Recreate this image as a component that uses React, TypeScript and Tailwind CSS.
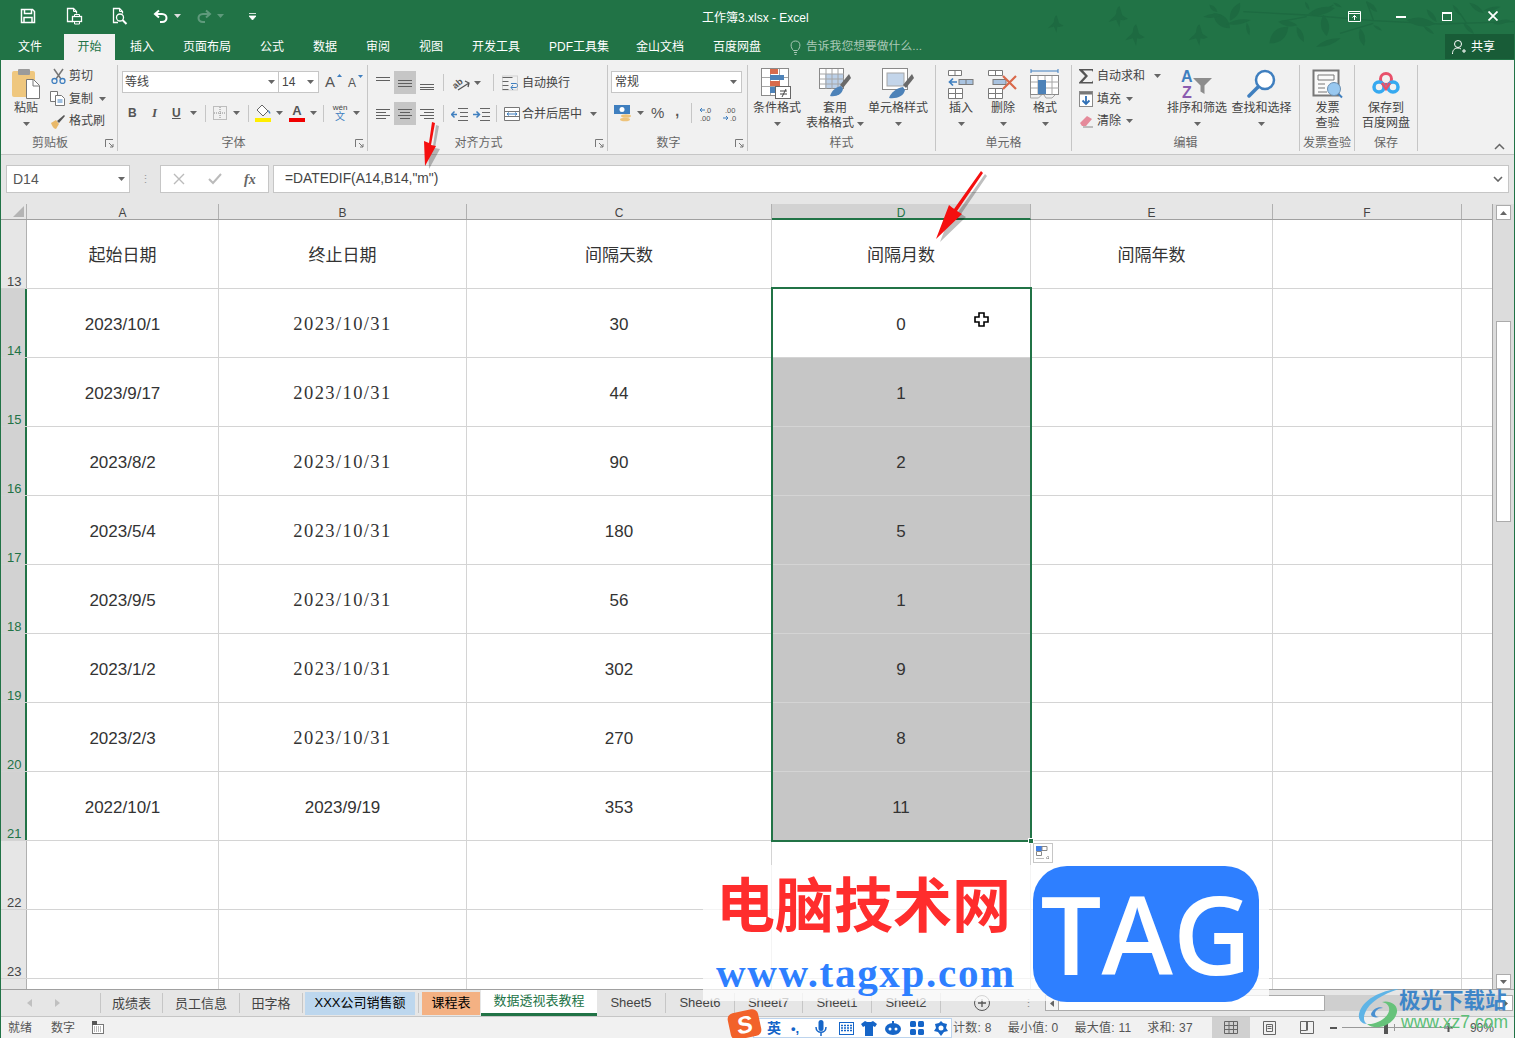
import React from "react";

const Caret = ({ c = "#666", className = "" }: { c?: string; className?: string }) => (
  <svg width="7" height="4" viewBox="0 0 7 4" className={className}><path d="M0 0h7L3.5 4z" fill={c} /></svg>
);

const Sep = ({ h = 22, ml = 0, mr = 0 }: { h?: number; ml?: number; mr?: number }) => (
  <div className="w-px bg-[#c6c6c6] shrink-0" style={{ height: h, marginLeft: ml, marginRight: mr }} />
);

const Lines = ({ y, w }: { y: number[]; w: [number, number][] }) => (
  <svg width="16" height="16" viewBox="0 0 16 16">
    {y.map((v, i) => (
      <rect key={i} x={w[i][0]} y={v} width={w[i][1]} height="1" fill="#606060" />
    ))}
  </svg>
);

const AlignBtn = ({ y, w, on }: { y: number[]; w: [number, number][]; on?: boolean }) => (
  <div className={`w-[22px] h-[23px] flex items-center justify-center ${on ? "bg-[#c6c6c6]" : ""}`}>
    <Lines y={y} w={w} />
  </div>
);

const full: [number, number][] = [[1, 14], [1, 14], [1, 14]];

const SheetGrid = ({ children }: { children?: React.ReactNode }) => (
  <g>
    <rect x=".5" y=".5" width="27" height="27" fill="#fff" stroke="#8a8a8a" />
    <path d="M1 9.5h26M1 18.5h26M9.5 1v26M18.5 1v26" stroke="#a6a6a6" />
    {children}
  </g>
);

const IconCond = () => (
  <svg width="32" height="32" viewBox="0 0 32 32">
    <SheetGrid>
      <rect x="9" y="1" width="8" height="5" fill="#d86b4c" />
      <rect x="9" y="7" width="14" height="5" fill="#4d82b8" />
      <rect x="9" y="13" width="10" height="5" fill="#d86b4c" />
      <rect x="9" y="19" width="7" height="6" fill="#4d82b8" />
    </SheetGrid>
    <rect x="14.5" y="18.5" width="15" height="12" fill="#fff" stroke="#666" />
    <path d="M19 23h7M19 26h7M25 21l-4 8" stroke="#444" fill="none" />
  </svg>
);
const IconTable = () => (
  <svg width="32" height="32" viewBox="0 0 32 32">
    <rect x=".5" y=".5" width="24" height="20" fill="#fff" stroke="#8a8a8a" />
    <rect x="6" y="6" width="18" height="14" fill="#bcd0e8" />
    <path d="M1 6h24M1 11h24M1 16h24M7 1v20M13 1v20M19 1v20" stroke="#a6a6a6" />
    <path d="M30 6l-9 11 3 3 8-10z" fill="#6a6a6a" />
    <path d="M11 28c2-6 6-9 11-10l2 3c-1 5-6 8-13 7z" fill="#4d82b8" />
  </svg>
);
const IconStyle = () => (
  <svg width="32" height="32" viewBox="0 0 32 32">
    <rect x=".5" y=".5" width="25" height="21" fill="#fff" stroke="#8a8a8a" />
    <rect x="5" y="5" width="17" height="13" fill="#c3d5ea" stroke="#a6a6a6" />
    <path d="M30 6l-9 11 3 3 8-10z" fill="#6a6a6a" />
    <path d="M7 30c2-6 8-10 14-11l2 3c-1 6-8 9-16 8z" fill="#4d82b8" />
  </svg>
);
const IconInsert = () => (
  <svg width="28" height="30" viewBox="0 0 28 30">
    <path d="M1.500 1.500h13v5h-13zM8 1.500v5M1.500 19.500h14v10h-14zM8.500 19.500v10M1.500 24.500h14" fill="#fff" stroke="#7a7a7a" />
    <rect x="12" y="10.500" width="14" height="5" fill="#a9c3e0" stroke="#7a7a7a" />
    <path d="M19 10.500v5" stroke="#7a7a7a" />
    <path d="M10 13H3M6 9.500L2.500 13 6 16.500" stroke="#3f7fbf" strokeWidth="1.700" fill="none" />
  </svg>
);
const IconDelete = () => (
  <svg width="32" height="30" viewBox="0 0 32 30">
    <path d="M1.500 1.500h14v5h-14zM8.500 1.500v5M1.500 19.500h14v10h-14zM8.500 19.500v10M1.500 24.500h14" fill="#fff" stroke="#7a7a7a" />
    <rect x="6" y="10.500" width="13" height="5" fill="#a9c3e0" stroke="#7a7a7a" />
    <path d="M16 7l13 13M29 7L16 20" stroke="#d9694a" strokeWidth="2.200" />
  </svg>
);
const IconFormat = () => (
  <svg width="30" height="32" viewBox="0 0 30 32">
    <path d="M1 3h27M1 1v4M28 1v4" stroke="#3f7fbf" fill="none" />
    <rect x=".5" y="7.500" width="28" height="19" fill="#fff" stroke="#8a8a8a" />
    <path d="M1 14h28M1 20h28M8 8v19M15 8v19M22 8v19M.5 27v3h8l3-3M14 27l2 3h6l3-3" stroke="#a6a6a6" fill="none" />
    <rect x="8" y="12" width="8" height="14" fill="#4d82b8" />
  </svg>
);
const IconSigma = () => (
  <svg width="16" height="16" viewBox="0 0 16 16"><path d="M1 1h14v3l-1-1.500H5l5 5.500-5.500 6H14l1-1.500v3H1v-1l6-6.500L1 2z" fill="#555" /></svg>
);
const IconFill = () => (
  <svg width="14" height="16" viewBox="0 0 14 16">
    <rect x=".5" y=".5" width="13" height="15" fill="#fff" stroke="#8a8a8a" />
    <rect x="1" y="1" width="12" height="2.500" fill="#777" />
    <path d="M7 5v8M3.500 9.500L7 13l3.500-3.500" stroke="#2f6fb5" strokeWidth="1.800" fill="none" />
  </svg>
);
const IconEraser = () => (
  <svg width="15" height="14" viewBox="0 0 15 14">
    <path d="M1 9l7-7 5 3-6 7H3z" fill="#e58a9a" />
    <path d="M4 13h10" stroke="#888" />
  </svg>
);
const IconSort = () => (
  <svg width="32" height="34" viewBox="0 0 32 34">
    <text x="0" y="15" fontSize="16" fontWeight="700" fill="#3f7fbf" fontFamily="Liberation Sans">A</text>
    <text x="1" y="31" fontSize="16" fontWeight="700" fill="#8a5cb0" fontFamily="Liberation Sans">Z</text>
    <path d="M12 11h19l-7.500 7.500V27l-4-2.500v-6z" fill="#8d8d8d" />
  </svg>
);
const IconFind = () => (
  <svg width="30" height="30" viewBox="0 0 30 30">
    <circle cx="18" cy="11" r="9" fill="#fff" stroke="#3f7fbf" strokeWidth="2.500" />
    <path d="M11 18L2 27" stroke="#3f7fbf" strokeWidth="3.500" strokeLinecap="round" />
  </svg>
);
const IconInvoice = () => (
  <svg width="32" height="30" viewBox="0 0 32 30">
    <rect x="1.500" y="1.500" width="25" height="25" fill="#fafafa" stroke="#777" strokeWidth="2" />
    <path d="M6 6h16v5H6z" fill="none" stroke="#777" />
    <path d="M6 15h7M6 19h7M6 23h9" stroke="#777" />
    <circle cx="22" cy="20" r="6.500" fill="#98c8f0" stroke="#6b8fb0" />
    <path d="M26.500 25l3.500 3.500" stroke="#3f7fbf" strokeWidth="2" />
  </svg>
);
const IconBaidu = () => (
  <svg width="28" height="26" viewBox="0 0 28 26">
    <circle cx="14" cy="8" r="5.500" fill="none" stroke="#e8506a" strokeWidth="3" />
    <circle cx="7" cy="16" r="5" fill="none" stroke="#36a9f0" strokeWidth="3.500" />
    <circle cx="21" cy="16" r="5" fill="none" stroke="#36a9f0" strokeWidth="3.500" />
    <path d="M10 12l4 6 4-6" fill="none" stroke="#e8506a" strokeWidth="2.500" />
  </svg>
);
const Launcher = () => (
  <svg width="9" height="9" viewBox="0 0 9 9" className="absolute right-[3px] bottom-[3px]">
    <path d="M.5 8V.5H8M4 4l4 4M5 8h3V5" stroke="#777" fill="none" />
  </svg>
);

const Big = ({ w, ml = 0, icon, l1, l2, caret = true, inline = false }: { w: number; ml?: number; icon: React.ReactNode; l1: string; l2?: string; caret?: boolean; inline?: boolean }) => (
  <div className="flex flex-col items-center shrink-0 text-[12px] leading-[15px] text-[#444]" style={{ width: w, marginLeft: ml }}>
    <div className="h-[34px] mt-[2px] flex items-center justify-center">{icon}</div>
    <div className="whitespace-nowrap">{l1}</div>
    {l2 ? (
      <div className="whitespace-nowrap flex items-center gap-[3px]">{l2}{inline ? <Caret /> : null}</div>
    ) : caret ? (
      <div className="h-[15px] flex items-center"><Caret /></div>
    ) : null}
  </div>
);

const Group = ({ w, label, launcher, children }: { w: number; label: string; launcher?: boolean; children: React.ReactNode }) => (
  <div className="shrink-0 h-[86px] border-r border-[#c6c6c6] flex flex-col relative" style={{ width: w }}>
    <div className="h-[69px] flex">{children}</div>
    <div className={`h-[17px] text-[12px] leading-[19px] text-[#666] text-center ${launcher ? "pr-[18px]" : ""}`}>{label}</div>
    {launcher ? <Launcher /> : null}
  </div>
);

const Small = ({ icon, text, caretMl, gap = 3, iconW = 16 }: { icon: React.ReactNode; text: string; caretMl?: number; gap?: number; iconW?: number }) => (
  <div className="h-[22.500px] flex items-center text-[12px] text-[#444] whitespace-nowrap">
    <div className="flex justify-center" style={{ width: iconW, marginRight: gap }}>{icon}</div>
    {text}
    {caretMl !== undefined ? <span style={{ marginLeft: caretMl }} className="flex"><Caret /></span> : null}
  </div>
);

const tabs: [string, number][] = [["页面布局", 48], ["公式", 24], ["数据", 24], ["审阅", 24], ["视图", 24], ["开发工具", 48], ["PDF工具集", 58], ["金山文档", 48], ["百度网盘", 48]];

const colW = [192, 248, 305, 259, 242, 189, 30];
const colN = ["A", "B", "C", "D", "E", "F", ""];
const rows: [string, string, string, string, string][] = [
  ["13", "起始日期", "终止日期", "间隔天数", "间隔月数"],
  ["14", "2023/10/1", "2023/10/31", "30", "0"],
  ["15", "2023/9/17", "2023/10/31", "44", "1"],
  ["16", "2023/8/2", "2023/10/31", "90", "2"],
  ["17", "2023/5/4", "2023/10/31", "180", "5"],
  ["18", "2023/9/5", "2023/10/31", "56", "1"],
  ["19", "2023/1/2", "2023/10/31", "302", "9"],
  ["20", "2023/2/3", "2023/10/31", "270", "8"],
  ["21", "2022/10/1", "2023/9/19", "353", "11"],
  ["22", "", "", "", ""],
  ["23", "", "", "", ""],
];

// [x1, y1, x2, y2, half-width] on a 3x drawing of the title bar's right part
const leaves: [number, number, number, number, number][] = [
  [520, 40, 570, 85, 30], [600, 8, 570, 62, 22], [560, 72, 632, 60, 14], [620, 68, 628, 106, 10], [508, 14, 532, 36, 12], [490, 50, 545, 45, 12],
  [805, 42, 885, 24, 22], [850, 45, 860, 108, 24], [745, 80, 688, 130, 34], [770, 80, 792, 126, 16], [715, 65, 772, 76, 16], [828, 140, 902, 115, 16],
  [960, 85, 972, 138, 18], [880, 8, 905, 22, 8], [978, 4, 1012, 36, 14], [1000, 76, 1026, 92, 8], [1100, 60, 1185, 72, 26], [1160, 28, 1190, 66, 14],
  [1150, 78, 1182, 102, 10], [1238, 14, 1262, 46, 10], [1288, 8, 1332, 40, 14], [1270, 70, 1302, 102, 12], [1330, 32, 1382, 20, 10], [1360, 72, 1412, 60, 12], [795, 5, 808, 30, 8],
];
const birds: [number, number][] = [[47, 72], [235, 50], [285, 105], [475, 105]];

const sheetTabs: [string, number][] = [["成绩表", 61], ["员工信息", 76], ["田字格", 62]];

const Arrow = ({ className, w, h, d }: { className: string; w: number; h: number; d: string }) => (
  <svg width={w} height={h} viewBox={`0 0 ${w} ${h}`} className={className}>
    <path d={d} fill="#000" opacity=".25" transform="translate(4 3)" />
    <path d={d} fill="#f50f0f" />
  </svg>
);

export default function App() {
  return (
    <div className="relative w-[1515px] h-[1038px] overflow-hidden flex flex-col border-x border-[#217346] bg-[#e6e6e6] font-['Liberation_Sans','Noto_Sans_CJK_SC',sans-serif]">
      {/* title */}
      <div className="relative h-[60px] shrink-0 bg-[#217346] text-white">
        <svg width="475" height="60" viewBox="0 0 1425 180" className="absolute right-[-1px] top-0">
          <path d="M610 35L800 45L1000 62L1200 72L1425 65M720 65L800 50M900 100L1000 70M880 15L830 45M980 5L1000 60M1260 40L1280 70" stroke="#1d6a41" strokeWidth="4" fill="none" />
          {leaves.map(([a, b, c, d, w], i) => {
            const l = Math.hypot(c - a, d - b);
            const r = (Math.atan2(d - b, c - a) * 180) / Math.PI;
            return <path key={i} d={`M0 0Q${l / 2} ${-w} ${l} 0Q${l / 2} ${w} 0 0z`} transform={`translate(${a} ${b}) rotate(${r})`} fill="#1d6a41" />;
          })}
          {birds.map(([x, y], i) => (
            <path key={i} d="M1-10C3-5 3-3 4-1L9 2C7 3 4 4 2 3L1 10L-2 3L-9 5C-6 1-3 0-2-3C-2-6-1-9 1-10z" transform={`translate(${x} ${y}) scale(${i === 0 ? 2.600 : 3.200})`} fill="#1d6a41" />
          ))}
        </svg>
        <div className="relative h-[32px] flex items-center">
          <svg width="16" height="16" viewBox="0 0 16 16" className="ml-[19px]"><path d="M1.500 1.500h11l2 2v11h-13z" fill="none" stroke="#fff" strokeWidth="1.500" /><path d="M4.500 1.500v4h7v-4M4 14.500v-5h8v5" fill="none" stroke="#fff" strokeWidth="1.500" /></svg>
          <svg width="18" height="18" viewBox="0 0 18 18" className="ml-[29px]"><path d="M8 14.500H2.500v-13h6l3 3v2" fill="none" stroke="#fff" strokeWidth="1.300" /><path d="M8.500 1.500v3h3" fill="none" stroke="#fff" /><rect x="7.500" y="9.500" width="9" height="5" fill="none" stroke="#fff" strokeWidth="1.300" /><path d="M9.500 9.500v-2h5v2M9.500 14v3h5v-3" fill="none" stroke="#fff" /></svg>
          <svg width="18" height="18" viewBox="0 0 18 18" className="ml-[28px]"><path d="M7 15.500H2.500v-14h6l3 3v2" fill="none" stroke="#fff" strokeWidth="1.300" /><path d="M8.500 1.500v3h3" fill="none" stroke="#fff" /><circle cx="9" cy="10.500" r="3.500" fill="none" stroke="#fff" strokeWidth="1.300" /><path d="M11.500 13l4 4" stroke="#fff" strokeWidth="2" /></svg>
          <svg width="16" height="14" viewBox="0 0 16 14" className="ml-[24px]"><path d="M6 1.500L2 5l4 3.500" fill="none" stroke="#fff" strokeWidth="2" /><path d="M2 5h7c6 0 6 8 0 8H7" fill="none" stroke="#fff" strokeWidth="2" /></svg>
          <Caret c="#ddd" className="ml-[5px]" />
          <svg width="16" height="14" viewBox="0 0 16 14" className="ml-[15px]"><path d="M10 1.500L14 5l-4 3.500" fill="none" stroke="#5f9a7c" strokeWidth="2" /><path d="M14 5H7c-6 0-6 8 0 8h2" fill="none" stroke="#5f9a7c" strokeWidth="2" /></svg>
          <Caret c="#5f9a7c" className="ml-[5px]" />
          <svg width="7" height="8" viewBox="0 0 7 8" className="ml-[25px]"><path d="M0 1.500h7M0 4h7l-3.500 4z" stroke="#fff" strokeWidth=".8" fill="#fff" /></svg>
          <div className="absolute left-[701px] top-[10px] text-[12px] leading-[16px] text-white whitespace-nowrap">工作簿3.xlsx - Excel</div>
          <div className="ml-auto flex items-center h-full mr-[16px]">
            <svg width="13" height="11" viewBox="0 0 13 11"><path d="M.5.500h12v10H.5zM1 2.500h11M6.500 9V4.500M4.500 6.500l2-2 2 2" stroke="#fff" fill="none" /></svg>
            <div className="w-[10px] h-[2px] bg-white ml-[35px] mt-[2px]" />
            <div className="w-[10px] h-[9px] border border-t-[2px] border-white ml-[36px]" />
            <svg width="10" height="10" viewBox="0 0 10 10" className="ml-[36px]"><path d="M.5.500l9 9M9.500.500l-9 9" stroke="#fff" strokeWidth="1.800" /></svg>
          </div>
        </div>
        <div className="relative h-[28px] flex items-end text-[12px] text-white whitespace-nowrap">
          <div className="w-[17px]" />
          <div className="h-[26px] leading-[26px] w-[24px]">文件</div>
          <div className="w-[22px]" />
          <div className="h-[26px] leading-[26px] w-[51px] bg-[#f1f1f1] text-center text-[#217346]">开始</div>
          <div className="flex h-[26px] leading-[26px] ml-[15px] gap-[29px]">
            <div>插入</div>
            {tabs.map(([t, w]) => <div key={t} style={{ width: w }}>{t}</div>)}
          </div>
          <div className="h-[26px] flex items-center ml-[29px] text-[#a9c8b6] text-[11.800px]">
            <svg width="11" height="15" viewBox="0 0 11 15" className="mr-[5px]"><path d="M3.500 10.500C.5 8-.5 1 5.500 1s5 7 2 9.500zM4 12.500h3M4.500 14.500h2" fill="none" stroke="#a9c8b6" /></svg>
            告诉我您想要做什么...
          </div>
          <div className="ml-auto mb-[1px] w-[69px] h-[25px] bg-[#185c37] flex items-center pl-[7px] text-[12px]">
            <svg width="14" height="16" viewBox="0 0 14 16" className="mr-[5px]"><circle cx="6" cy="5" r="3.500" fill="none" stroke="#fff" /><path d="M.5 15c0-4 2-6 5.500-6 1 0 2 .3 3 1M10 12h4M12 10v4" stroke="#fff" fill="none" /></svg>
            共享
          </div>
        </div>
      </div>

      {/* ribbon */}
      <div className="relative h-[95px] shrink-0 bg-[#f1f1f1] border-b border-[#c6c6c6] pt-[5px] flex">
        <Group w={117} label="剪贴板" launcher>
          <div className="w-[24px] ml-[13px] flex flex-col items-center text-[12px] leading-[15px] text-[#444]">
            <svg width="28" height="32" viewBox="0 0 28 32" className="mt-[3px] mb-[1px] shrink-0">
              <rect x="0" y="3" width="23" height="26" rx="2" fill="#efc77e" />
              <rect x="6" y="1" width="12" height="6" rx="1" fill="#9b9b9b" />
              <path d="M14.500 11.500h7l6 6v13h-13z" fill="#fff" stroke="#777" />
              <path d="M21 12v6h6" fill="none" stroke="#777" />
            </svg>
            <div className="whitespace-nowrap h-[15px]">粘贴</div>
            <div className="h-[15px] flex items-center"><Caret /></div>
          </div>
          <div className="ml-[12px] flex flex-col">
            <Small text="剪切" iconW={16} icon={<svg width="15" height="16" viewBox="0 0 15 16"><path d="M3 1l7 10M12 1L5 11" stroke="#777" strokeWidth="1.500" /><circle cx="3.500" cy="13" r="2.500" fill="none" stroke="#3f7fbf" strokeWidth="1.300" /><circle cx="11.500" cy="13" r="2.500" fill="none" stroke="#3f7fbf" strokeWidth="1.300" /></svg>} />
            <Small text="复制" iconW={16} caretMl={6} icon={<svg width="16" height="15" viewBox="0 0 16 15"><path d="M.5.500h7v10h-7z" fill="#fff" stroke="#777" /><path d="M5.500 4.500h6l3 3v7h-9z" fill="#fff" stroke="#777" /><path d="M7.500 9h5M7.500 11h5" stroke="#3f7fbf" /></svg>} />
            <Small text="格式刷" iconW={16} icon={<svg width="16" height="15" viewBox="0 0 16 15"><path d="M1 9l5-3 3 4-3 5c-2 0-4-3-5-6z" fill="#e9b96a" /><path d="M7 7l7-6 1 1-6 7z" fill="#555" /></svg>} />
          </div>
        </Group>

        <Group w={250} label="字体" launcher>
          <div className="pl-[4px] pt-[6px] flex flex-col">
            <div className="flex items-center h-[22px]">
              <div className="w-[157px] h-[22px] bg-white border border-[#c6c6c6] flex items-center justify-between pl-[2px] pr-[3px] text-[12px] text-[#444]">等线<Caret /></div>
              <div className="w-[40px] h-[22px] bg-white border border-l-0 border-[#c6c6c6] flex items-center justify-between pl-[3px] pr-[4px] text-[12px] text-[#444]">14<Caret /></div>
              <div className="ml-[6px] text-[15px] text-[#555] relative w-[14px]">A<svg width="5" height="3" className="absolute right-[-3px] top-[3px]"><path d="M0 3l2.500-3L5 3z" fill="#3f7fbf" /></svg></div>
              <div className="ml-[9px] text-[12px] text-[#555] relative w-[14px] mt-[2px]">A<svg width="5" height="3" className="absolute right-[-1px] top-[1px]"><path d="M0 0l2.500 3L5 0z" fill="#3f7fbf" /></svg></div>
            </div>
            <div className="flex items-center h-[22px] mt-[9px] text-[13px] text-[#555]">
              <span className="ml-[6px] w-[10px] font-bold font-['Liberation_Sans'] text-[12px]">B</span>
              <span className="ml-[14px] w-[8px] italic font-bold font-['Liberation_Serif']">I</span>
              <span className="ml-[12px] w-[11px] font-bold underline text-[12px]">U</span>
              <Caret className="ml-[7px]" />
              <Sep h={17} ml={8} />
              <svg width="14" height="14" viewBox="0 0 14 14" className="ml-[7px]"><path d="M.5.500h13v13H.5zM7 1v12M1 7h12" stroke="#888" strokeDasharray="1 1" fill="none" /></svg>
              <Caret className="ml-[6px]" />
              <Sep h={17} ml={8} />
              <svg width="17" height="18" viewBox="0 0 17 18" className="ml-[6px]"><path d="M7 1l6 6-5 5-6-6z" fill="#fff" stroke="#666" /><path d="M13 6c2 1 3 3 2 4-1-1-2-2-2-4z" fill="#3f7fbf" /><rect x="0" y="14" width="16" height="4" fill="#ffee00" /></svg>
              <Caret className="ml-[4px]" />
              <div className="ml-[6px] w-[16px] flex flex-col items-center">
                <span className="text-[13px] leading-[14px] font-bold text-[#555]">A</span>
                <div className="w-[16px] h-[4px] bg-[#f00000]" />
              </div>
              <Caret className="ml-[5px]" />
              <Sep h={17} ml={6} />
              <div className="ml-[8px] w-[16px] flex flex-col items-center leading-none">
                <span className="text-[8px] text-[#444]">wén</span>
                <span className="text-[10px] text-[#3f7fbf]">文</span>
              </div>
              <Caret className="ml-[5px]" />
            </div>
          </div>
        </Group>

        <Group w={240} label="对齐方式" launcher>
          <div className="pl-[4px] pt-[6px] flex flex-col">
            <div className="flex items-center h-[23px]">
              <div className="ml-[0px] flex">
                <AlignBtn y={[2, 5, 12]} w={[[1, 14], [1, 14], [20, 0]]} />
                <AlignBtn y={[5, 8, 11]} w={full} on />
                <AlignBtn y={[9, 12, 14]} w={[[1, 14], [1, 14], [1, 14]]} />
              </div>
              <Sep h={17} ml={5} />
              <svg width="20" height="20" viewBox="0 0 20 20" className="ml-[7px]"><text x="1" y="13" fontSize="9" fontWeight="700" fill="#555" transform="rotate(-40 7 10)" fontFamily="Liberation Sans">ab</text><path d="M7 17l11-7M14 8l4 2-1 4" stroke="#555" strokeWidth="1.300" fill="none" /></svg>
              <Caret className="ml-[3px]" />
              <Sep h={17} ml={12} />
              <svg width="17" height="16" viewBox="0 0 17 16" className="ml-[8px]"><path d="M.5 2.500h10M.5 6.500h6M.5 10.500h6M.5 14.500h6" stroke="#666" /><path d="M9 8.500h5c2 0 2 4 0 4H9M11 10l-2 2.500L11 15" stroke="#3f7fbf" fill="none" /><rect x=".5" y="1" width="15" height="14" fill="none" stroke="#777" opacity=".25" /></svg>
              <span className="ml-[3px] text-[12px] text-[#444]">自动换行</span>
            </div>
            <div className="flex items-center h-[23px] mt-[8px]">
              <AlignBtn y={[3, 6, 9, 12]} w={[[1, 14], [1, 10], [1, 14], [1, 10]]} />
              <AlignBtn y={[3, 6, 9, 12]} w={[[1, 14], [3, 10], [1, 14], [3, 10]]} on />
              <AlignBtn y={[3, 6, 9, 12]} w={[[1, 14], [5, 10], [1, 14], [5, 10]]} />
              <Sep h={17} ml={5} />
              <svg width="17" height="14" viewBox="0 0 17 14" className="ml-[7px]"><path d="M7 1.500h10M9 5.500h8M9 9.500h8M7 13.500h10" stroke="#666" /><path d="M6 7.500H1M3.500 4.500L.5 7.500l3 3" stroke="#3f7fbf" strokeWidth="1.500" fill="none" /></svg>
              <svg width="17" height="14" viewBox="0 0 17 14" className="ml-[5px]"><path d="M7 1.500h10M9 5.500h8M9 9.500h8M7 13.500h10" stroke="#666" /><path d="M0 7.500h6M3.500 4.500l3 3-3 3" stroke="#3f7fbf" strokeWidth="1.500" fill="none" /></svg>
              <Sep h={17} ml={6} />
              <svg width="16" height="14" viewBox="0 0 16 14" className="ml-[7px]"><path d="M.5.500h15v13H.5zM.5 4.500h15M.5 9.500h15" stroke="#777" fill="#fff" /><path d="M3 7h10M5 5.500L3 7l2 1.500M11 5.500L13 7l-2 1.500" stroke="#3f7fbf" fill="none" /></svg>
              <span className="ml-[2px] text-[12px] text-[#444]">合并后居中</span>
              <Caret className="ml-[8px]" />
            </div>
          </div>
        </Group>

        <Group w={140} label="数字" launcher>
          <div className="pl-[3px] pt-[6px] flex flex-col">
            <div className="w-[131px] h-[22px] bg-white border border-[#c6c6c6] flex items-center justify-between pl-[3px] pr-[4px] text-[12px] text-[#444]">常规<Caret /></div>
            <div className="flex items-center h-[22px] mt-[9px] text-[#555]">
              <svg width="18" height="18" viewBox="0 0 18 18" className="ml-[3px]"><rect x="0" y="1" width="16" height="9" fill="#3f7fbf" /><circle cx="8" cy="5.500" r="2.500" fill="#fff" /><ellipse cx="12" cy="12" rx="5" ry="1.800" fill="#eec37a" /><ellipse cx="11" cy="15.500" rx="5" ry="1.800" fill="#eec37a" /></svg>
              <Caret className="ml-[5px]" />
              <span className="ml-[7px] text-[15px]">%</span>
              <span className="ml-[11px] text-[14px] font-bold leading-none mb-[4px]">,</span>
              <Sep h={20} ml={12} />
              <svg width="16" height="17" viewBox="0 0 16 17" className="ml-[7px]"><text x="6" y="8" fontSize="7.500" fill="#555" fontFamily="Liberation Sans">.0</text><text x="1" y="16" fontSize="7.500" fill="#555" fontFamily="Liberation Sans">.00</text><path d="M6 5H1M3 3L1 5l2 2" stroke="#3f7fbf" fill="none" /></svg>
              <svg width="16" height="17" viewBox="0 0 16 17" className="ml-[7px]"><text x="3" y="8" fontSize="7.500" fill="#555" fontFamily="Liberation Sans">.00</text><text x="8" y="16" fontSize="7.500" fill="#555" fontFamily="Liberation Sans">.0</text><path d="M1 13h5M4 11l2 2-2 2" stroke="#3f7fbf" fill="none" /></svg>
            </div>
          </div>
        </Group>

        <Group w={188} label="样式">
          <Big w={58} icon={<IconCond />} l1="条件格式" />
          <Big w={58} icon={<IconTable />} l1="套用" l2="表格格式" inline />
          <Big w={68} icon={<IconStyle />} l1="单元格样式" />
        </Group>

        <Group w={136} label="单元格">
          <Big w={44} ml={3} icon={<IconInsert />} l1="插入" />
          <Big w={40} icon={<IconDelete />} l1="删除" />
          <Big w={44} icon={<IconFormat />} l1="格式" />
        </Group>

        <Group w={228} label="编辑">
          <div className="ml-[6px] flex flex-col w-[87px]">
            <Small text="自动求和" iconW={16} caretMl={9} icon={<IconSigma />} />
            <Small text="填充" iconW={16} caretMl={5} icon={<IconFill />} />
            <Small text="清除" iconW={16} caretMl={5} icon={<IconEraser />} />
          </div>
          <Big w={64} icon={<IconSort />} l1="排序和筛选" />
          <Big w={65} icon={<IconFind />} l1="查找和选择" />
        </Group>

        <Group w={55} label="发票查验">
          <Big w={55} icon={<IconInvoice />} l1="发票" l2="查验" />
        </Group>
        <Group w={63} label="保存">
          <Big w={62} icon={<IconBaidu />} l1="保存到" l2="百度网盘" />
        </Group>
        <svg width="11" height="7" viewBox="0 0 11 7" className="absolute right-[9px] bottom-[4px]"><path d="M1 6l4.500-4.500L10 6" stroke="#666" strokeWidth="1.500" fill="none" /></svg>
      </div>

      {/* formula bar */}
      <div className="h-[49px] shrink-0 pt-[10px] pl-[5px] pr-[5px] flex items-start">
        <div className="w-[124px] h-[28px] bg-white border border-[#c6c6c6] flex items-center justify-between pl-[6px] pr-[4px] text-[14px] text-[#555]">D14<Caret /></div>
        <div className="w-[30px] h-[28px] flex items-center justify-center text-[#999] text-[11px] leading-[5px]">⋮</div>
        <div className="w-[109px] h-[28px] bg-white border border-[#c6c6c6] flex items-center text-[#bbb]">
          <svg width="12" height="12" viewBox="0 0 12 12" className="ml-[12px]"><path d="M1 1l10 10M11 1L1 11" stroke="#bbb" strokeWidth="1.400" /></svg>
          <svg width="14" height="12" viewBox="0 0 14 12" className="ml-[23px]"><path d="M1 6l4 4 8-9" stroke="#bbb" strokeWidth="2" fill="none" /></svg>
          <span className="ml-[22px] text-[14px] italic font-bold text-[#666] font-['Liberation_Serif']">fx</span>
        </div>
        <div className="ml-[4px] flex-1 h-[28px] bg-white border border-[#c6c6c6] flex items-center justify-between pl-[11px] pr-[5px] text-[13.800px] text-[#444]">
          =DATEDIF(A14,B14,"m")
          <svg width="10" height="6" viewBox="0 0 10 6"><path d="M1 1l4 4 4-4" stroke="#666" strokeWidth="1.600" fill="none" /></svg>
        </div>
      </div>

      {/* sheet */}
      <div className="flex flex-1 min-h-0">
        <div className="w-[1492px] shrink-0 border-r border-[#a6a6a6] overflow-hidden">
          <div className="flex h-[16px] border-b border-[#a0a0a0] text-[12px] leading-[18px] text-[#444]">
            <div className="w-[26px] shrink-0 border-r border-[#b0b0b0] flex items-end justify-end pr-[2px] pb-[2px]">
              <svg width="11" height="11" viewBox="0 0 11 11"><path d="M11 0v11H0z" fill="#b4b4b4" /></svg>
            </div>
            {colN.map((c, i) => (
              <div key={i} className={`shrink-0 text-center ${i < 6 ? "border-r border-[#b0b0b0]" : ""} ${i === 3 ? "bg-[#d2d2d2] text-[#217346] border-b-2 border-b-[#217346] h-[16px]" : ""}`} style={{ width: colW[i] }}>{c}</div>
            ))}
          </div>
          {rows.map((r, ri) => {
            const sel = ri >= 1 && ri <= 8;
            return (
              <div key={r[0]} className="flex h-[69px] border-b border-[#d4d4d4]">
                <div className={`w-[26px] shrink-0 border-r flex items-end pl-[6px] text-[13px] leading-[13px] ${sel ? "bg-[#d2d2d2] text-[#217346] border-r-2 border-r-[#217346]" : "bg-[#e6e6e6] text-[#444] border-[#b0b0b0]"}`}>{r[0]}</div>
                {colW.map((w, ci) => {
                  const head = ri === 0;
                  const txt = ci < 4 ? r[ci + 1] : ci === 4 && head ? "间隔年数" : "";
                  const gray = ci === 3 && ri >= 2 && ri <= 8;
                  return (
                    <div key={ci} className={`shrink-0 flex items-center justify-center pt-[4px] text-[#333] ${ci < 6 ? "border-r border-[#d4d4d4]" : ""} ${gray ? "bg-[#c6c6c6]" : "bg-white"} ${ci === 1 && !head && ri <= 7 ? "font-['Liberation_Serif'] text-[18.500px] tracking-[1.400px]" : "text-[17px]"}`} style={{ width: w }}>{txt}</div>
                  );
                })}
              </div>
            );
          })}
          <div className="flex h-[10px]">
            <div className="w-[26px] shrink-0 bg-[#e6e6e6] border-r border-[#b0b0b0]" />
            {colW.map((w, i) => (
              <div key={i} className={`shrink-0 bg-white ${i < 6 ? "border-r border-[#d4d4d4]" : ""}`} style={{ width: w }} />
            ))}
          </div>
        </div>
        <div className="flex-1 bg-[#dcdcdc] px-[3px] pt-px flex flex-col">
          <div className="h-[15px] bg-white border border-[#ababab] flex items-center justify-center"><svg width="7" height="4"><path d="M0 4l3.500-4L7 4z" fill="#666" /></svg></div>
          <div className="mt-[101px] h-[201px] bg-white border border-[#ababab]" />
          <div className="mt-auto h-[15px] bg-white border border-[#ababab] flex items-center justify-center"><Caret /></div>
        </div>
      </div>

      {/* tabs */}
      <div className="h-[27px] shrink-0 border-t border-[#a0a0a0] flex items-center text-[13px] text-[#444] whitespace-nowrap bg-[#e6e6e6]">
        <svg width="6" height="8" viewBox="0 0 6 8" className="ml-[26px]"><path d="M5 0v8L0 4z" fill="#c0c0c0" /></svg>
        <svg width="6" height="8" viewBox="0 0 6 8" className="ml-[22px]"><path d="M0 0v8l5-4z" fill="#c0c0c0" /></svg>
        <div className="ml-[39px] flex items-center h-[26px]">
          <Sep h={20} />
          {sheetTabs.map(([t, w]) => (
            <div key={t} className="flex items-center h-full">
              <div className="text-center leading-[19px]" style={{ width: w }}>{t}</div>
              <Sep h={20} />
            </div>
          ))}
          <div className="w-[110px] h-[23px] bg-[#bdd7ee] ml-[2px] text-center leading-[22px] text-black">XXX公司销售额</div>
          <Sep h={20} ml={3} mr={3} />
          <div className="w-[58px] h-[23px] bg-[#f4b183] text-center leading-[22px] text-black">课程表</div>
          <div className="w-[116px] h-[26px] ml-[1px] bg-white text-[#217346] text-center leading-[22px] border-b-[3px] border-[#217346]">数据透视表教程</div>
          <div className="w-[68px] text-center">Sheet5</div><Sep h={20} />
          <div className="w-[68px] text-center">Sheet6</div><Sep h={20} />
          <div className="w-[67px] text-center">Sheet7</div><Sep h={20} />
          <div className="w-[68px] text-center">Sheet1</div><Sep h={20} />
          <div className="w-[68px] text-center">Sheet2</div><Sep h={20} />
          <svg width="16" height="16" viewBox="0 0 16 16" className="ml-[33px]"><circle cx="8" cy="8" r="7.500" fill="none" stroke="#555" /><path d="M4 8h8M8 4v8" stroke="#555" strokeWidth="1.300" /></svg>
          <div className="ml-[33px] w-[20px] text-[#888] text-[11px]">⋮</div>
          <div className="w-[14px] h-[16px] bg-[#f4f4f4] border border-[#ababab] ml-[2px] flex items-center justify-center shrink-0"><svg width="4" height="7"><path d="M4 0v7L0 3.500z" fill="#666" /></svg></div>
          <div className="w-[266px] h-[16px] bg-white border border-l-0 border-[#ababab] shrink-0" />
          <div className="w-[174px] h-[16px] bg-[#cfcfcf] shrink-0" />
          <div className="w-[14px] h-[16px] bg-white border border-[#ababab] flex items-center justify-center shrink-0"><svg width="4" height="7"><path d="M0 0v7l4-3.500z" fill="#666" /></svg></div>
        </div>
      </div>

      {/* status */}
      <div className="h-[22px] shrink-0 bg-[#f1f1f1] border-t border-[#c6c6c6] flex items-center text-[12px] text-[#555] whitespace-nowrap">
        <span className="ml-[7px]">就绪</span>
        <span className="ml-[19px]">数字</span>
        <svg width="12" height="13" viewBox="0 0 12 13" className="ml-[17px]"><rect x=".5" y="3.500" width="11" height="9" fill="#fff" stroke="#777" /><rect x="0" y="0" width="5" height="4" fill="#555" /><path d="M2 6h8M2 8h8M2 10h8" stroke="#777" strokeDasharray="1 1" /></svg>
        <span className="ml-[849px] tracking-[0.250px]">计数: 8</span>
        <span className="ml-[16px] tracking-[0.250px]">最小值: 0</span>
        <span className="ml-[16px] tracking-[0.250px]">最大值: 11</span>
        <span className="ml-[16px] tracking-[0.250px]">求和: 37</span>
        <div className="ml-[19px] w-[38px] h-full bg-[#d0d0d0] flex items-center justify-center">
          <svg width="14" height="13" viewBox="0 0 14 13"><path d="M.5.500h13v12H.5zM.5 4.500h13M.5 8.500h13M5 .5v12M9.500.5v12" stroke="#666" fill="none" /></svg>
        </div>
        <svg width="13" height="14" viewBox="0 0 13 14" className="ml-[13px]"><path d="M.5.500h12v13H.5zM3.500 3.500h6v7h-6zM4.500 5.500h4M4.500 7.500h4" stroke="#666" fill="none" /></svg>
        <svg width="14" height="13" viewBox="0 0 14 13" className="ml-[24px]"><path d="M.5.500h13v12H.5zM.5 9.500h6v-9M7.500.5v9" stroke="#666" fill="none" /></svg>
        <div className="ml-[16px] w-[7px] h-[2px] bg-[#555]" />
        <div className="ml-[5px] relative w-[106px] h-px bg-[#999]">
          <div className="absolute left-[42px] top-[-6px] w-[4px] h-[13px] bg-[#555]" />
          <div className="absolute left-[52px] top-[-3px] w-px h-[7px] bg-[#999]" />
        </div>
        <svg width="9" height="9" viewBox="0 0 9 9" className="ml-[-4px]"><path d="M0 4.500h9M4.500 0v9" stroke="#555" strokeWidth="2" /></svg>
        <span className="ml-[17px] text-[#555]">90%</span>
      </div>

      {/* selection outline */}
      <div className="absolute left-[770px] top-[287px] w-[261px] h-[555px] border-2 border-[#217346] pointer-events-none" />
      <div className="absolute left-[1027px] top-[838px] w-[6px] h-[6px] bg-[#217346] border border-white" />
      <div className="absolute left-[1032px] top-[843px] w-[20px] h-[20px] bg-white border border-[#c6c6c6] flex items-center justify-center">
        <svg width="14" height="14" viewBox="0 0 14 14"><rect x="0" y="0" width="6" height="5" fill="#3f7fe8" /><path d="M6 .5h5v4H6zM.5 5.500h5v4h-5z" stroke="#888" fill="none" /><path d="M.5 12.500h7M10 12h4M12 10v4" stroke="#777" strokeDasharray="1 1" /></svg>
      </div>
      <svg width="16" height="16" viewBox="0 0 16 16" className="absolute left-[973px] top-[312px]"><path d="M5 1h5v4h4v5h-4v4H5v-4H1V5h4z" fill="#fff" stroke="#000" strokeWidth="1.600" /></svg>

      {/* arrows */}
      <Arrow className="absolute left-[415px] top-[118px]" w={28} h={54} d="M16 4l3 1-4 22 5 1-11 20 -1-25 5 2z" />
      <Arrow className="absolute left-[930px] top-[166px]" w={58} h={76} d="M50 5l2 2-26 38 5 3-26 25 13-34 5 4z" />

      {/* watermarks */}
      <div className="absolute left-[702px] top-[865px] w-[566px] h-[136px] bg-white/75" />
      <div className="absolute left-[715px] top-[862px] text-[59px] leading-[80px] font-bold text-[#ff2d2d] whitespace-nowrap font-['Noto_Sans_CJK_SC',sans-serif]">电脑技术网</div>
      <div className="absolute left-[715px] top-[948px] text-[41px] leading-[50px] tracking-[1.700px] font-bold text-[#2e7fff] whitespace-nowrap font-['Liberation_Serif',serif]">www.tagxp.com</div>
      <div className="absolute left-[1032px] top-[866px] w-[226px] h-[136px] rounded-[34px] bg-[#2e7fff] flex items-center justify-center text-white text-[108px] leading-none font-semibold font-['Open_Sans',sans-serif]">TAG</div>

      <svg width="44" height="46" viewBox="0 0 44 46" className="absolute left-[1356px] top-[988px]">
        <path d="M42 1C24 2 5 12 2 26c-1 6 3 10 8 10-3-2-4-6-2-11C12 14 26 6 42 1z" fill="#5fb4e6" />
        <path d="M10 36c10 8 28 0 30-12 1-8-8-12-15-10 5 1 8 4 7 9-2 8-14 14-22 13z" fill="#66c27a" />
        <path d="M14 26c2-5 8-8 12-6-5 0-8 3-8 6 0 2 2 3 4 3-4 1-8 0-8-3z" fill="#4a90d0" />
      </svg>
      <div className="absolute left-[1398px] top-[984px] text-[21.500px] leading-[30px] font-bold text-[#3f86c8] whitespace-nowrap font-['Noto_Sans_CJK_SC',sans-serif]">极光下载站</div>
      <div className="absolute left-[1400px] top-[1011px] text-[17.500px] leading-[22px] text-[#5cbf78] whitespace-nowrap">www.xz7.com</div>

      {/* IME bar */}
      <div className="absolute left-[752px] top-[1018px] w-[199px] h-[20px] bg-white border border-[#bcd4ee] flex items-center text-[#1565c8]">
        <span className="ml-[13px] text-[14px] font-bold leading-none">英</span>
        <span className="ml-[10px] text-[13px] font-bold leading-none">•,</span>
        <svg width="12" height="17" viewBox="0 0 12 17" className="ml-[16px]"><rect x="3.500" y="0" width="5" height="11" rx="2.500" fill="#1565c8" /><path d="M1 7c0 7 10 7 10 0M6 13v3" stroke="#1565c8" strokeWidth="1.500" fill="none" /></svg>
        <svg width="15" height="13" viewBox="0 0 15 13" className="ml-[12px]"><rect x=".5" y=".5" width="14" height="12" fill="none" stroke="#1565c8" /><path d="M2 3.500h11M2 6h11M2 8.500h11" stroke="#1565c8" strokeWidth="1.500" strokeDasharray="2 1" /></svg>
        <svg width="16" height="15" viewBox="0 0 16 15" className="ml-[7px]"><path d="M4 0L0 3l2 3 2-1v10h8V5l2 1 2-3-4-3-2 1H6z" fill="#1565c8" /></svg>
        <svg width="16" height="14" viewBox="0 0 16 14" className="ml-[8px]"><ellipse cx="8" cy="8" rx="8" ry="6" fill="#1565c8" /><rect x="7" y="0" width="2" height="3" fill="#1565c8" /><circle cx="5" cy="8" r="1.500" fill="#fff" /><circle cx="11" cy="8" r="1.500" fill="#fff" /></svg>
        <svg width="14" height="14" viewBox="0 0 14 14" className="ml-[9px]"><rect width="6" height="6" rx="1.500" fill="#1565c8" /><rect x="8" width="6" height="6" rx="1.500" fill="#1565c8" /><rect y="8" width="6" height="6" rx="1.500" fill="#1565c8" /><rect x="8" y="8" width="6" height="6" rx="1.500" fill="#1565c8" /></svg>
        <svg width="14" height="15" viewBox="0 0 14 15" className="ml-[10px]"><path d="M7 0l2 2 4 1-1 4 2 3-4 1-3 4-3-4-4-1 2-3-1-4 4-1z" fill="#1565c8" /><circle cx="7" cy="7" r="2.500" fill="#fff" /></svg>
      </div>
      <div className="absolute left-[728px] top-[1011px] w-[31px] h-[27px] bg-[#f2622a] rounded-[6px] -rotate-12 flex items-center justify-center text-white text-[24px] font-bold italic leading-none">S</div>
    </div>
  );
}
